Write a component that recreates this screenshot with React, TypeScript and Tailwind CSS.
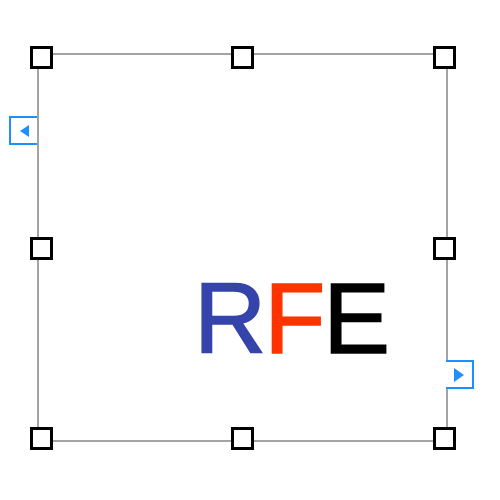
const HANDLES = [
  'left-[-9px] top-[-9px]',
  'left-[192px] top-[-9px]',
  'left-[394px] top-[-9px]',
  'left-[-9px] top-[182px]',
  'left-[394px] top-[182px]',
  'left-[-9px] top-[372px]',
  'left-[192px] top-[372px]',
  'left-[394px] top-[372px]',
];

function Handle({ pos }: { pos: string }) {
  return <div className={`absolute ${pos} h-[23px] w-[23px] border-[3px] border-black bg-white`} />;
}

export default function App() {
  return (
    <div className="h-[500px] w-[500px] bg-white pl-[37px] pt-[53px]">
      <div className="relative h-[389px] w-[411px] border-2 border-[#a3a3a3] pl-[155px] pt-[213px]">
        <div
          className="flex text-[100px] leading-none tracking-[-2px] [-webkit-text-stroke:1.5px_currentColor]"
          style={{ fontFamily: '"Liberation Sans", Arial, sans-serif' }}
        >
          <span className="text-[#3444aa]">R</span>
          <span className="text-[#ff3300]">F</span>
          <span className="text-black">E</span>
        </div>

        {/* input port */}
        <div className="absolute left-[-30px] top-[61px] flex h-[29px] w-[28px] items-center justify-center border-2 border-r-0 border-[#1e8fff] bg-white">
          <svg width="9" height="12" viewBox="0 0 9 12">
            <polygon points="9,0 9,12 0,6" fill="#1e8fff" />
          </svg>
        </div>

        {/* output port */}
        <div className="absolute left-[407px] top-[305px] flex h-[29px] w-[28px] items-center justify-center border-2 border-l-0 border-[#1e8fff] bg-white">
          <svg width="10" height="14" viewBox="0 0 10 14">
            <polygon points="0,0 0,14 10,7" fill="#1e8fff" />
          </svg>
        </div>

        {HANDLES.map((pos) => (
          <Handle key={pos} pos={pos} />
        ))}
      </div>
    </div>
  );
}
